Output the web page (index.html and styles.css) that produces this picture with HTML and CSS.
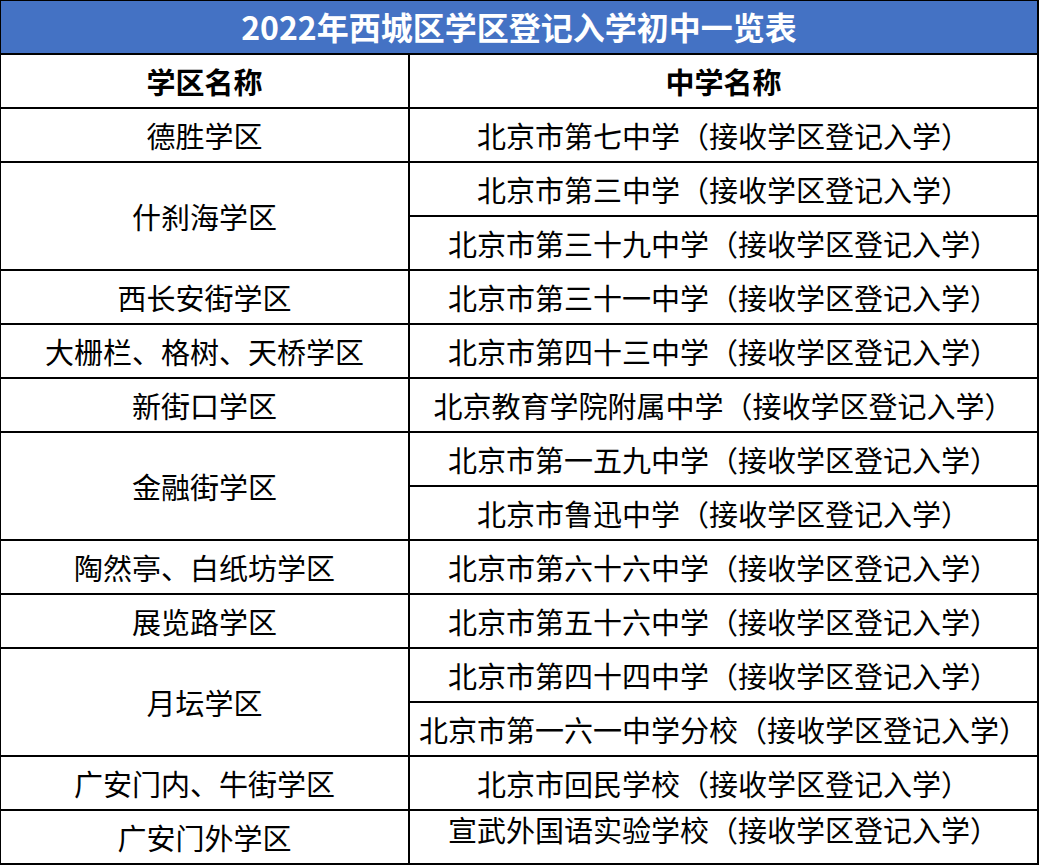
FILE: index.html
```html
<!DOCTYPE html>
<html lang="zh-CN">
<head>
<meta charset="utf-8">
<title>2022年西城区学区登记入学初中一览表</title>
<link rel="stylesheet" href="styles.css">
</head>
<body>
<table class="sheet">
  <colgroup>
    <col class="col-district">
    <col class="col-school">
  </colgroup>
  <tr class="title-row"><td colspan="2" class="title">2022年西城区学区登记入学初中一览表</td></tr>
  <tr><td class="head">学区名称</td><td class="head">中学名称</td></tr>
  <tr><td>德胜学区</td><td>北京市第七中学（接收学区登记入学）</td></tr>
  <tr><td rowspan="2">什刹海学区</td><td>北京市第三中学（接收学区登记入学）</td></tr>
  <tr><td>北京市第三十九中学（接收学区登记入学）</td></tr>
  <tr><td>西长安街学区</td><td>北京市第三十一中学（接收学区登记入学）</td></tr>
  <tr><td>大栅栏、格树、天桥学区</td><td>北京市第四十三中学（接收学区登记入学）</td></tr>
  <tr><td>新街口学区</td><td>北京教育学院附属中学（接收学区登记入学）</td></tr>
  <tr><td rowspan="2">金融街学区</td><td>北京市第一五九中学（接收学区登记入学）</td></tr>
  <tr><td>北京市鲁迅中学（接收学区登记入学）</td></tr>
  <tr><td>陶然亭、白纸坊学区</td><td>北京市第六十六中学（接收学区登记入学）</td></tr>
  <tr><td>展览路学区</td><td>北京市第五十六中学（接收学区登记入学）</td></tr>
  <tr><td rowspan="2">月坛学区</td><td>北京市第四十四中学（接收学区登记入学）</td></tr>
  <tr><td>北京市第一六一中学分校（接收学区登记入学）</td></tr>
  <tr><td>广安门内、牛街学区</td><td>北京市回民学校（接收学区登记入学）</td></tr>
  <tr><td>广安门外学区</td><td class="raised">宣武外国语实验学校（接收学区登记入学）</td></tr>
</table>
</body>
</html>
```

FILE: styles.css
```css
html, body {
  margin: 0;
  padding: 0;
  background: #ffffff;
}

.sheet {
  border-collapse: separate;
  border-spacing: 0;
  table-layout: fixed;
  width: 1039px;
  border-top: 1px solid #000;
  border-left: 1px solid #000;
  font-family: "Noto Sans CJK SC", "Microsoft YaHei", sans-serif;
  color: #000;
}

.col-district { width: 409px; }
.col-school { width: 629px; }

.sheet td {
  height: 52px;
  padding: 0;
  border-right: 2px solid #000;
  border-bottom: 2px solid #000;
  text-align: center;
  vertical-align: middle;
  font-size: 29px;
  line-height: 1;
  white-space: nowrap;
  box-sizing: content-box;
}

.sheet td.title {
  background: #4472c4;
  color: #ffffff;
  font-weight: 700;
  font-size: 32px;
  padding-bottom: 2px;
  height: 50px;
}

.sheet td.head {
  font-weight: 700;
}

.sheet td.raised {
  padding-bottom: 16px;
  height: 36px;
}
```
